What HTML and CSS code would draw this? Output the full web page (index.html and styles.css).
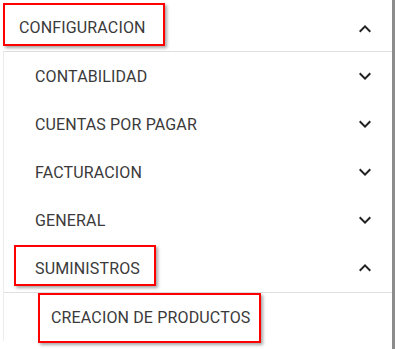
FILE: index.html
```html
<!DOCTYPE html>
<html lang="es">
<head>
<meta charset="utf-8">
<title>Menu</title>
<link rel="stylesheet" href="styles.css">
</head>
<body>
<div class="page">
  <div class="panel">
    <div class="header">
      <span class="label">CONFIGURACION</span>
      <svg class="chev" viewBox="0 0 24 24"><path d="M12 8l-6 6 1.41 1.41L12 10.83l4.59 4.58L18 14z"/></svg>
      <span class="mark mark-config"></span>
    </div>
    <div class="body">
      <div class="row">
        <span class="label">CONTABILIDAD</span>
        <svg class="chev" viewBox="0 0 24 24"><path d="M7.41 8.59L12 13.17l4.59-4.58L18 10l-6 6-6-6 1.41-1.41z"/></svg>
      </div>
      <div class="row">
        <span class="label">CUENTAS POR PAGAR</span>
        <svg class="chev" viewBox="0 0 24 24"><path d="M7.41 8.59L12 13.17l4.59-4.58L18 10l-6 6-6-6 1.41-1.41z"/></svg>
      </div>
      <div class="row">
        <span class="label">FACTURACION</span>
        <svg class="chev" viewBox="0 0 24 24"><path d="M7.41 8.59L12 13.17l4.59-4.58L18 10l-6 6-6-6 1.41-1.41z"/></svg>
      </div>
      <div class="row">
        <span class="label">GENERAL</span>
        <svg class="chev" viewBox="0 0 24 24"><path d="M7.41 8.59L12 13.17l4.59-4.58L18 10l-6 6-6-6 1.41-1.41z"/></svg>
      </div>
      <div class="row row-open">
        <span class="label">SUMINISTROS</span>
        <svg class="chev" viewBox="0 0 24 24"><path d="M12 8l-6 6 1.41 1.41L12 10.83l4.59 4.58L18 14z"/></svg>
        <span class="mark mark-sum"></span>
      </div>
      <div class="row row-sub">
        <span class="label">CREACION DE PRODUCTOS</span>
        <span class="mark mark-prod"></span>
      </div>
    </div>
  </div>
  <div class="scrollbar"></div>
</div>
</body>
</html>
```
FILE: styles.css
```css
html, body {
  margin: 0;
  padding: 0;
  background: #ffffff;
}

body {
  font-family: Roboto, "Noto Sans", "Liberation Sans", sans-serif;
  font-size: 16px;
  letter-spacing: 0.15px;
  color: #3a3a3a;
}

.page {
  display: flex;
  height: 100vh;
  overflow: hidden;
}

.panel {
  flex: 1;
  min-width: 0;
}

.scrollbar {
  width: 3px;
  background: #8c8c8c;
}

.header {
  position: relative;
  display: flex;
  align-items: center;
  height: 51px;
  box-sizing: border-box;
  padding: 3px 15px 0 19px;
}

.label {
  flex: 1;
  white-space: nowrap;
}

.chev {
  width: 24px;
  height: 24px;
  fill: #222222;
  flex: none;
}

.header .chev {
  margin-top: 3px;
}

.body {
  margin-left: 3px;
  border-top: 1px solid #e0e0e0;
  border-left: 1px solid #ececec;
}

.row {
  position: relative;
  display: flex;
  align-items: center;
  height: 48px;
  padding: 0 15px 0 31px;
}

.row-open {
  border-bottom: 1px solid #e0e0e0;
}

.row-sub {
  padding-left: 47px;
}

.mark {
  position: absolute;
  box-sizing: border-box;
  border: 2px solid #ff0000;
  box-shadow: 2px 2px 3px rgba(0, 0, 0, 0.35);
  pointer-events: none;
}

.mark-config {
  left: 3px;
  top: 3px;
  width: 162px;
  height: 43px;
}

.mark-sum {
  left: 10px;
  top: 1px;
  width: 142px;
  height: 41px;
}

.mark-prod {
  left: 34px;
  top: 0;
  width: 223px;
  height: 50px;
}
```
